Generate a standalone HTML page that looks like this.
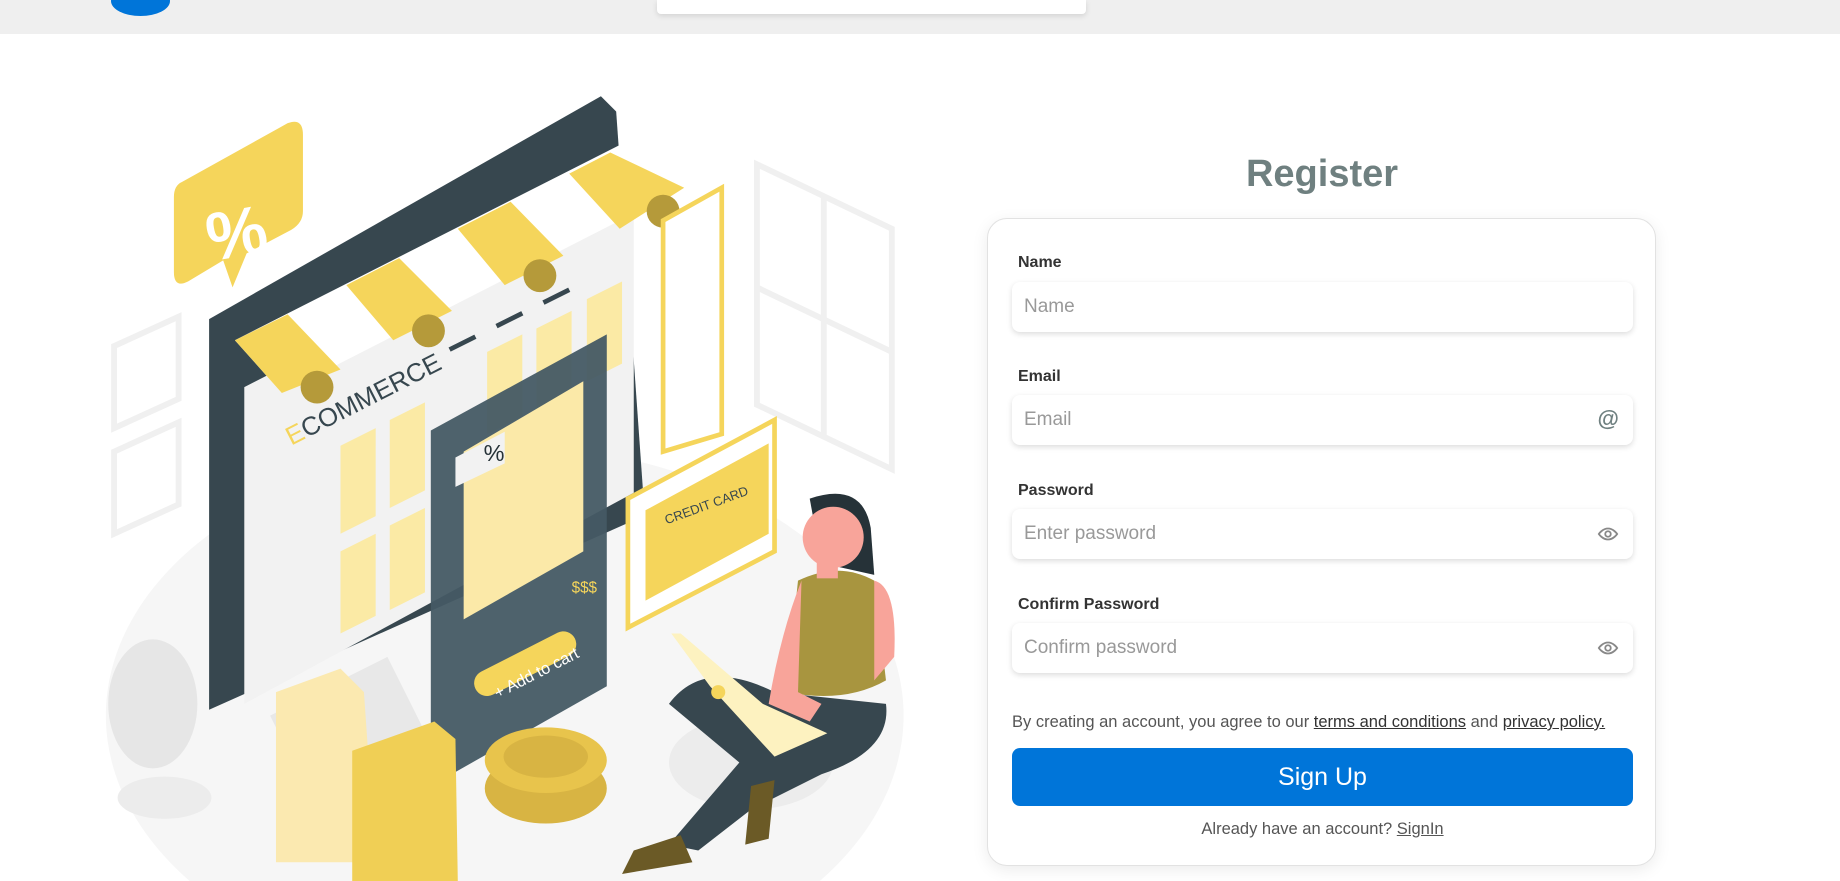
<!DOCTYPE html>
<html><head><meta charset="utf-8"><style>
*{box-sizing:border-box;margin:0;padding:0}
body{width:1840px;height:881px;overflow:hidden;background:#fff;font-family:"Liberation Sans",sans-serif;position:relative}
.top{position:absolute;left:0;top:0;width:1840px;height:34px;background:#efefef}
.logo{position:absolute;left:111px;top:-14px;width:59px;height:30px;border-radius:50%;background:#0075d9}
.search{position:absolute;left:657px;top:0;width:429px;height:14px;background:#fff;border-radius:0 0 4px 4px;box-shadow:0 2px 6px rgba(0,0,0,.12)}
h1{position:absolute;left:1122px;width:400px;top:153px;text-align:center;font-size:38px;font-weight:bold;color:#6f8080}
.card{position:absolute;left:987px;top:218px;width:669px;height:648px;border:1px solid #e2e2e2;border-radius:20px;box-shadow:0 4px 16px rgba(0,0,0,.08);background:#fff}
.lab{position:absolute;left:30px;font-size:16px;font-weight:bold;color:#333}
.inp{position:absolute;left:24px;width:621px;height:50px;border-radius:8px;background:#fff;box-shadow:0 2px 6px rgba(0,0,0,.14);font-size:19px;color:#999;padding:14px 0 0 12px}
.ic{position:absolute;right:14px;top:14px}
.terms{position:absolute;left:24px;top:494px;width:625px;font-size:16.5px;color:#555;white-space:nowrap}
.terms u{color:#333}
.btn{position:absolute;left:24px;top:529px;width:621px;height:58px;border-radius:8px;background:#0075d9;color:#fff;font-size:25px;text-align:center;line-height:58px}
.al{position:absolute;left:0;width:669px;top:601px;text-align:center;font-size:16.5px;color:#555}
</style></head><body>
<div class="top"><div class="logo"></div><div class="search"></div></div>
<svg style="position:absolute;left:0;top:0" width="1840" height="881" viewBox="0 0 1568 751">
<ellipse cx="430" cy="610" rx="340" ry="230" fill="#f6f6f6"/>
<g fill="none" stroke="#f0f0f0" stroke-width="5"><polygon points="645,140 760,195 760,400 645,345"/><line x1="702" y1="168" x2="702" y2="372"/><line x1="645" y1="245" x2="760" y2="300"/>
<polygon points="97,295 152,270 152,340 97,365"/><polygon points="97,385 152,360 152,430 97,455"/></g>
<polygon points="178,272 512,82 525,95 548,420 548,440 178,605" fill="#37474f"/>
<polygon points="208,330 540,160 540,420 208,600" fill="#f2f2f2"/>
<polygon points="230,610 330,560 360,620 260,670" fill="#e8e8e8"/>
<g fill="#fbeaa5"><polygon points="290,380 320,365 320,440 290,455"/><polygon points="332,358 362,343 362,418 332,433"/><polygon points="290,470 320,455 320,525 290,540"/><polygon points="332,448 362,433 362,505 332,520"/><polygon points="415,300 445,285 445,355 415,370"/><polygon points="457,280 487,265 487,335 457,350"/><polygon points="500,255 530,240 530,310 500,325"/></g>
<g stroke="#37474f" stroke-width="4"><line x1="383" y1="298" x2="405" y2="287"/><line x1="423" y1="278" x2="445" y2="267"/><line x1="463" y1="258" x2="485" y2="247"/></g>
<text x="248" y="380" font-size="22" fill="#37474f" transform="rotate(-27 248 380)" font-family="Liberation Sans"><tspan fill="#f5d55b">E</tspan>COMMERCE</text>
<g><polygon points="200,290 545,115 583,160 240,335" fill="#fff"/>
<g fill="#f5d55b"><polygon points="200,290 245,268 290,315 240,335"/><polygon points="295,243 340,220 385,265 335,290"/><polygon points="390,195 435,172 480,218 430,243"/><polygon points="485,148 520,130 583,160 528,195"/></g>
<g fill="#b59a3a"><circle cx="270" cy="330" r="14"/><circle cx="365" cy="282" r="14"/><circle cx="460" cy="235" r="14"/><circle cx="565" cy="180" r="14"/></g></g>
<path d="M155,155 L245,105 Q258,100 258,115 L258,180 Q258,190 248,196 L210,216 L198,245 L190,222 L160,240 Q148,246 148,232 L148,168 Q148,158 155,155 Z" fill="#f5d55b"/>
<text x="176" y="218" font-size="58" font-weight="bold" fill="#fff" font-family="Liberation Sans" transform="rotate(-10 205 200)">%</text>
<polygon points="367,367 517,285 517,585 367,670" fill="#455a64" opacity=".95"/>
<polygon points="395,385 497,325 497,470 395,528" fill="#fbe9a8"/>
<polygon points="388,390 430,368 430,395 388,415" fill="#f2f2f2"/><text x="412" y="393" font-size="20" fill="#263238" font-family="Liberation Sans">%</text>
<rect x="400" y="555" width="95" height="22" rx="11" fill="#f5d55b" transform="rotate(-27 447 566)"/>
<text x="413" y="582" font-size="14" fill="#fff" transform="rotate(-27 447 566)" font-family="Liberation Sans">+ Add to cart</text>
<text x="487" y="505" font-size="13" fill="#f5d55b" font-family="Liberation Sans">$$$</text>
<polygon points="565,188 615,160 615,370 565,385" fill="#fff" stroke="#f5d55b" stroke-width="4"/>
<polygon points="535,425 660,358 660,470 535,535" fill="#fff" stroke="#f5d55b" stroke-width="4"/>
<polygon points="550,435 655,378 655,455 550,512" fill="#f5d55b"/>
<text x="568" y="447" font-size="11" fill="#37474f" transform="rotate(-20 568 447)" font-family="Liberation Sans">CREDIT CARD</text>
<ellipse cx="130" cy="600" rx="38" ry="55" fill="#e6e6e6"/><ellipse cx="140" cy="680" rx="40" ry="18" fill="#ececec"/>
<polygon points="235,590 290,570 310,590 320,735 235,735" fill="#fbe9b0"/>
<polygon points="300,640 370,615 388,630 390,751 300,751" fill="#f0cf55"/>
<ellipse cx="465" cy="672" rx="52" ry="30" fill="#d8b443"/><ellipse cx="465" cy="648" rx="52" ry="28" fill="#e8c44c"/><ellipse cx="465" cy="645" rx="36" ry="18" fill="#d8b443"/>
<ellipse cx="640" cy="650" rx="70" ry="40" fill="#ececec"/>
<path d="M570,600 Q600,560 660,590 L755,600 Q760,640 700,660 L640,690 L595,725 L570,720 L630,650 Z" fill="#37474f"/>
<path d="M540,725 L580,712 L590,735 L530,745 Z" fill="#6b5a26"/><path d="M640,670 L660,665 L655,715 L635,720 Z" fill="#6b5a26"/>
<path d="M680,495 Q715,478 745,495 L755,580 Q720,600 670,590 Z" fill="#a8953f"/>
<path d="M745,495 Q765,500 762,560 L745,580 Z" fill="#f8a49a"/>
<path d="M683,495 Q665,540 655,600 L690,615 L700,600 L680,590 Z" fill="#f8a49a"/>
<path d="M690,425 Q735,410 742,450 L745,490 L700,480 Z" fill="#263238"/><circle cx="710" cy="458" r="26" fill="#f8a49a"/>
<rect x="696" y="479" width="18" height="14" fill="#f8a49a"/>
<polygon points="572,540 605,585 660,645 705,625 650,600 580,540" fill="#fdf2c0"/>
<circle cx="612" cy="590" r="6" fill="#f5d55b"/>
</svg>
<h1>Register</h1>
<div class="card">
<div class="lab" style="top:35px">Name</div>
<div class="inp" style="top:63px">Name</div>
<div class="lab" style="top:149px">Email</div>
<div class="inp" style="top:176px">Email<span class="ic" style="color:#6f8080;font-size:22px;top:11px;font-weight:bold">@</span></div>
<div class="lab" style="top:263px">Password</div>
<div class="inp" style="top:290px">Enter password<svg class="ic" width="22" height="22" viewBox="0 0 24 24" fill="none" stroke="#888" stroke-width="2"><path d="M2 12s4-6 10-6 10 6 10 6-4 6-10 6S2 12 2 12z"/><circle cx="12" cy="12" r="3"/></svg></div>
<div class="lab" style="top:377px">Confirm Password</div>
<div class="inp" style="top:404px">Confirm password<svg class="ic" width="22" height="22" viewBox="0 0 24 24" fill="none" stroke="#888" stroke-width="2"><path d="M2 12s4-6 10-6 10 6 10 6-4 6-10 6S2 12 2 12z"/><circle cx="12" cy="12" r="3"/></svg></div>
<div class="terms">By creating an account, you agree to our <u>terms and conditions</u> and <u>privacy policy.</u></div>
<div class="btn">Sign Up</div>
<div class="al">Already have an account? <u>SignIn</u></div>
</div>
</body></html>
